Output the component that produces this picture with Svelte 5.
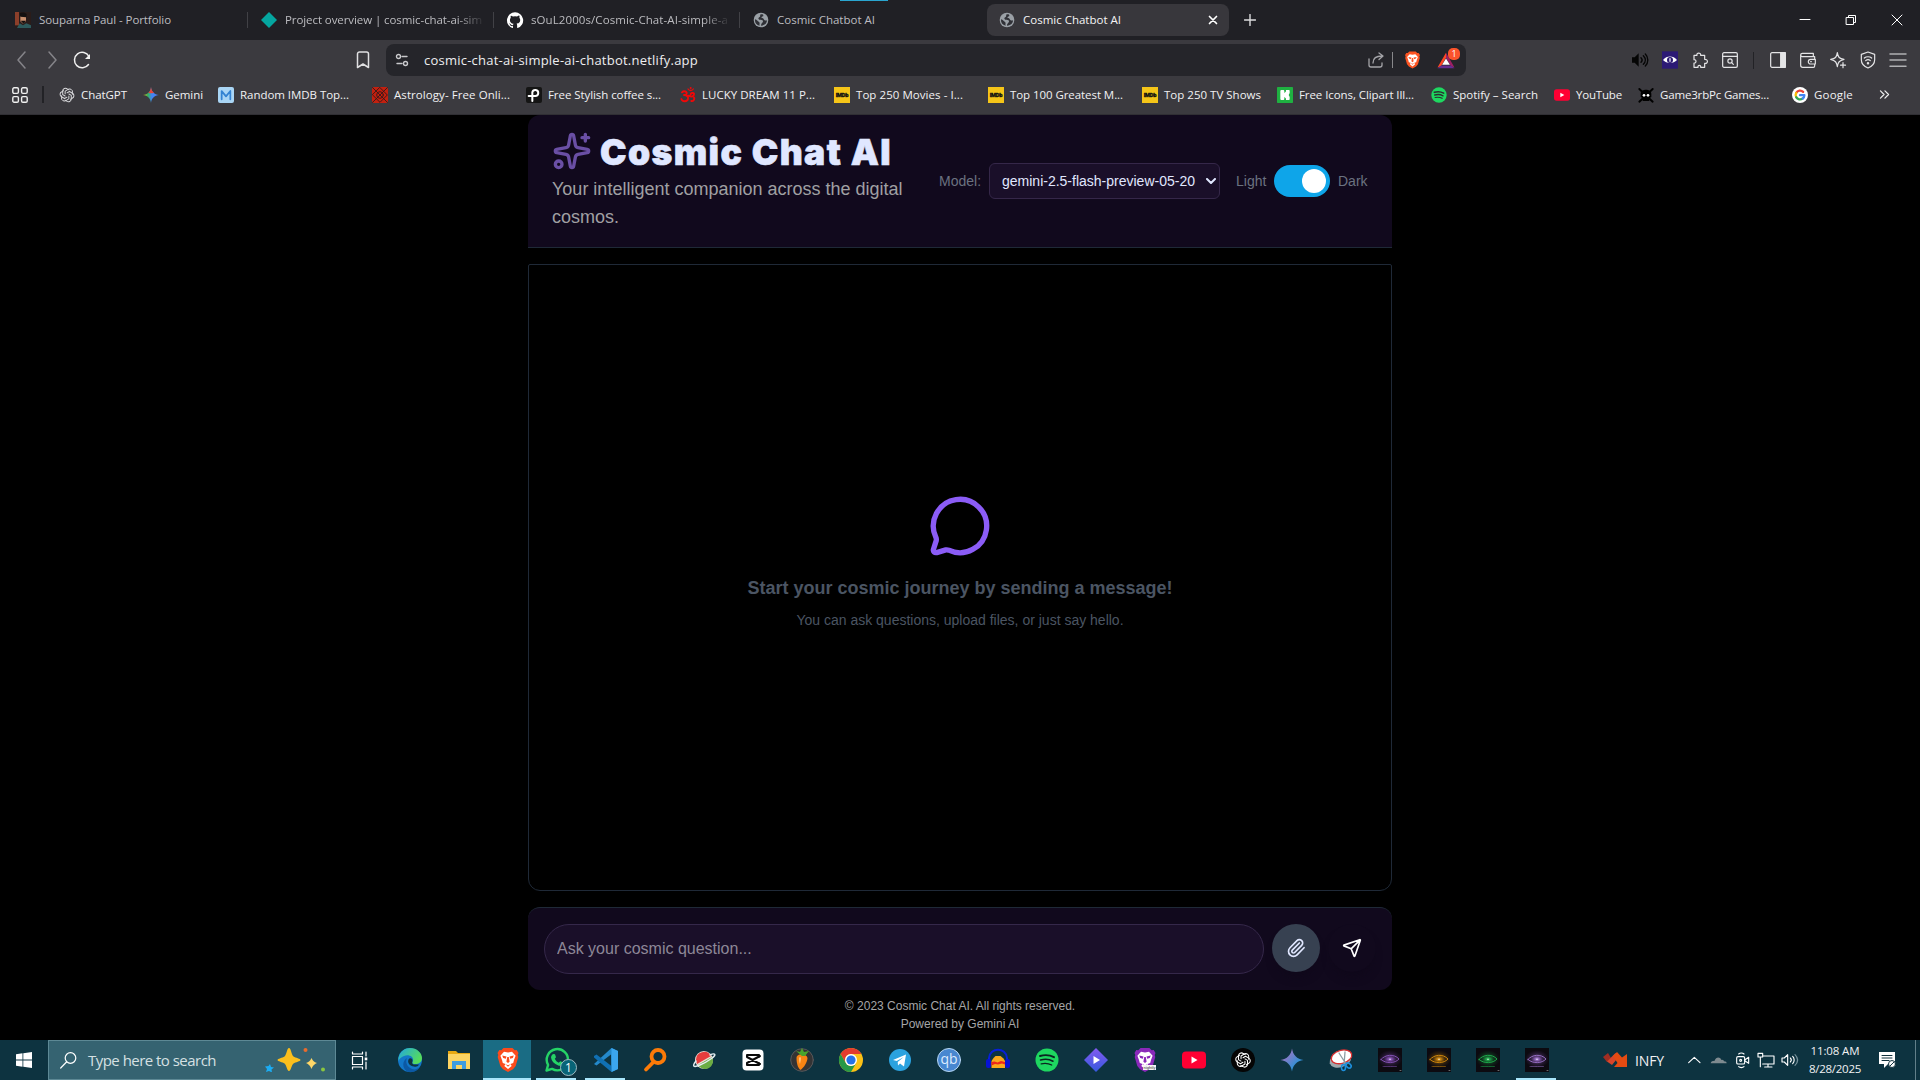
<script>
  function fit(node, width) {
    if (!width) return;
    const range = document.createRange();
    range.selectNodeContents(node);
    const natural = range.getBoundingClientRect().width;
    node.style.letterSpacing = `${(width - natural) / node.textContent.length}px`;
  }

  // Six interlocked petals, turned round the centre.
  const petals = [0, 60, 120, 180, 240, 300]
    .map((a) => `<path d="M9.200 10.300V6.200l4.600-2.700a4.300 4.300 0 0 1 6.400 4.300v3" transform="rotate(${a} 12 12)"/>`)
    .join('');
  const gpt = `<g fill="none" stroke="currentColor" stroke-width="1.500" stroke-linecap="round">${petals}</g>`;
  const globe = '<circle cx="12" cy="12" r="11" fill="#9aa0a6"/><path fill="#303137" d="M13 3.500c-4 0-1 3-3 4s-3 3-.500 4 5-.300 5.500 2-3 3-3 7c6 0 9-4 9-8-2 1-4 0-5-2s-3.500-1-3.500-2.500 3-1 3-2.500-1-2-2.500-2zM3 11c3 .500 4 3 6 4s0 4 1 5.500C5 19.500 2.500 16 3 11z"/>';
  const spark4 = 'M12 0C12.8 7 17 11.2 24 12 17 12.8 12.8 17 12 24 11.2 17 7 12.8 0 12 7 11.2 11.2 7 12 0z';
  const spotify = (bg, w) => `<circle cx="12" cy="12" r="11.5" fill="#1ed760"/><g fill="none" stroke="${bg}" stroke-linecap="round"><path stroke-width="${w}" d="M5 8c5-1.5 10-1 14 1.2"/><path stroke-width="${w * 0.85}" d="M5.6 12c4-1.2 9-.8 12.4 1.2"/><path stroke-width="${w * 0.7}" d="M6.2 15.8c4-.9 7.4-.5 10.5 1.2"/></g>`;
  const lion = (bg, fg) => `<path fill="${bg}" d="M7.500 0h9l2.200 2.200 2-.200L22.500 5l-.800 2 .600 2-2.600 9-2.700 3.200L12 24l-5-2.800L4.300 18 1.700 9l.600-2-.800-2 1.800-3 2 .200z"/><path fill="${fg}" d="M8 3.800l4 .700 4-.700 3.600 4-1.600 4.200-.800 3-2.700 1 1.200 2L12 21l-3.700-3 1.200-2-2.700-1L6 12 4.400 7.800z"/><path fill="${bg}" d="M6.200 7.600l4.300.900-.700 2.300-2.600-.800zM17.800 7.600l-4.300.900.700 2.300 2.600-.800zM11.200 9h1.600l.800 4.800L12 15l-1.600-1.200zM9.500 16.300l2.500 1 2.500-1-2.500 2.400z"/>`;
  const imdb = '<rect width="24" height="24" fill="#f5c518"/><text x="2.500" y="15.500" font-family="Roboto" font-weight="900" font-size="8.500" textLength="19" stroke="#111" stroke-width=".5" fill="#111">IMDb</text>';
  const yt = '<rect y="3.500" width="24" height="17" rx="4" fill="#ff0033"/><path fill="#fff" d="M9.500 8.500v7l6-3.500z"/>';
  const galaxy = (id, c, d) => `<defs><radialGradient id="${id}"><stop offset="0" stop-color="#fff"/><stop offset=".25" stop-color="${c}"/><stop offset="1" stop-color="${d}" stop-opacity="0"/></radialGradient></defs><rect width="24" height="24" fill="#0c0a10"/><ellipse cx="12" cy="11" rx="12" ry="9" fill="url(#${id})" opacity=".45"/><path d="M3 11.500c4-5 13-6 18-.500-4 4.500-13 5-18 .500z" fill="none" stroke="${c}" stroke-width="1" opacity=".95"/><ellipse cx="12" cy="11.200" rx="6" ry="3.800" fill="url(#${id})"/><path stroke="${c}" stroke-width=".8" stroke-dasharray="1 .4" opacity=".55" d="M5 18.500h14"/><path stroke="#aaa" stroke-width="1" opacity=".6" d="M22 22.500h1"/>`;

  const tabs = [
    { title: 'Souparna Paul - Portfolio', w: 132, icon: '<rect width="24" height="24" fill="#2a1c1a"/><path fill="#8c3f2a" d="M0 0h6v20H0z"/><path fill="#c98f6e" d="M8 6h8.500v8l-4 4-4.500-4z"/><path fill="#141010" d="M7 2c3-2 8-2 10.500 1L17 8 8 7zM8.500 13h8l-3.500 5z"/><path fill="#2d5a5c" d="M3 24l4-7 5 3 5-3 7 3v4z"/>' },
    { title: 'Project overview | cosmic-chat-ai-sim', w: 197, fade: true, icon: '<path fill="#05a6a0" d="M12 0l12 12-12 12L0 12z"/>' },
    { title: 'sOuL2000s/Cosmic-Chat-AI-simple-a', w: 197, fade: true, icon: '<path fill="#fff" d="M12 .5a12 12 0 0 0-3.800 23.400c.6.1.8-.3.8-.6v-2.200c-3.300.7-4-1.400-4-1.400-.6-1.400-1.400-1.800-1.400-1.800-1-.7.100-.7.100-.7 1.200.1 1.900 1.200 1.900 1.200 1 1.800 2.800 1.300 3.500 1 .1-.8.4-1.300.8-1.600-2.700-.3-5.500-1.300-5.500-6 0-1.200.5-2.300 1.300-3.100-.2-.4-.6-1.600.1-3.200 0 0 1-.3 3.300 1.200a11.500 11.500 0 0 1 6 0C17.400 5.100 18.400 5.400 18.400 5.400c.7 1.600.3 2.800.1 3.200.8.8 1.300 1.900 1.300 3.200 0 4.600-2.800 5.600-5.500 5.900.5.4.9 1 .9 2.200v3.400c0 .3.200.7.8.6A12 12 0 0 0 12 .5z"/>' },
    { title: 'Cosmic Chatbot AI', w: 98, icon: globe },
    { title: 'Cosmic Chatbot AI', w: 98, active: true, icon: globe }
  ];

  const marks = [
    { t: 'ChatGPT', w: 46, cell: 84, icon: gpt },
    { t: 'Gemini', w: 38, cell: 75, icon: `<defs><linearGradient id="gm" x1="0" y1="0" x2="1" y2="0"><stop offset="0" stop-color="#f9c512"/><stop offset=".3" stop-color="#35b35a"/><stop offset=".55" stop-color="#4285f4"/><stop offset="1" stop-color="#4a7df5"/></linearGradient></defs><path fill="url(#gm)" d="${spark4}"/><path fill="#ea4335" d="M12 0c.3 4 2 7 4.500 9L12 9.500 8 9c2.500-2 3.700-5 4-9z"/>` },
    { t: 'Random IMDB Top...', w: 109, cell: 154, icon: '<rect width="24" height="24" rx="3" fill="#a9d5f5"/><path d="M5.500 18.500V6L12 14l6.500-8v12.500" fill="none" stroke="#3383d2" stroke-width="2.600"/>' },
    { t: 'Astrology- Free Onli...', w: 116, cell: 154, icon: '<rect width="24" height="24" rx="3" fill="#c3200f"/><g fill="none" stroke="#35191a" stroke-width="1.400"><path d="M1 1l22 22M23 1L1 23M12 1l11 11-11 11L1 12z"/><circle cx="12" cy="12" r="5"/></g>' },
    { t: 'Free Stylish coffee s...', w: 113, cell: 154, icon: '<rect width="24" height="24" rx="3" fill="#151515"/><path d="M9.500 21V8a4.500 4.500 0 1 1 4.500 5.500H4" fill="none" stroke="#fff" stroke-width="3"/>' },
    { t: 'LUCKY DREAM 11 P...', w: 113, cell: 154, icon: '<g fill="none" stroke="#f00808" stroke-width="2.800" stroke-linecap="round"><path d="M3 8c3-3 8-1 7 2-.4 2-3 2-4 2 4 0 7 2 6 6s-8 5-10 0"/><path d="M11 14c3-3 5 2 8 0s3-6-1-5c-2 .5-2 2-2 2M20 14c3 3 1 8-3 7"/><path d="M12 3c2 3 6 3 8 0" stroke-width="2"/></g><circle cx="16" cy="1.500" r="1.500" fill="#f00808"/>' },
    { t: 'Top 250 Movies - I...', w: 107, cell: 154, icon: imdb },
    { t: 'Top 100 Greatest M...', w: 113, cell: 154, icon: imdb },
    { t: 'Top 250 TV Shows', w: 97, cell: 135, icon: imdb },
    { t: 'Free Icons, Clipart Ill...', w: 115, cell: 154, icon: '<rect width="24" height="24" rx="1" fill="#1fb141"/><path fill="#fff" d="M5 6a1.500 1.500 0 0 1 1.500-1.500h3A1.500 1.500 0 0 1 11 6v3a4 4 0 0 0 2.500-4.500H18A1.500 1.500 0 0 1 19 6.500V9l-1.500 3 1.500 3v3a1.500 1.500 0 0 1-1 1.500h-4.500A4 4 0 0 0 11 15v3a1.500 1.500 0 0 1-1.500 1.500h-3A1.500 1.500 0 0 1 5 18z"/>' },
    { t: 'Spotify – Search', w: 85, cell: 123, icon: spotify('#2b2f30', 2.4) },
    { t: 'YouTube', w: 46, cell: 84, icon: yt },
    { t: 'Game3rbPc Games...', w: 109, cell: 154, icon: '<path stroke="#000" stroke-width="3" stroke-linecap="round" d="M2 3l20 19M22 3L2 22"/><path fill="#000" d="M4 10c0-8 16-8 16 0v5l-3 2v4H7v-4l-3-2z"/><circle cx="9" cy="12.500" r="2" fill="#fff"/><circle cx="15" cy="12.500" r="2" fill="#fff"/>' },
    { t: 'Google', w: 39, cell: 87, icon: '<circle cx="12" cy="12" r="12" fill="#fff"/><g fill="none" stroke-width="3.400"><path stroke="#ea4335" d="M6.300 8.800A6.600 6.600 0 0 1 16.700 7.300"/><path stroke="#fbbc05" d="M6.300 8.800a6.600 6.600 0 0 0 0 6.400"/><path stroke="#34a853" d="M6.300 15.200A6.600 6.600 0 0 0 16 17.300"/><path stroke="#4285f4" d="M16 17.300A6.600 6.600 0 0 0 18.600 12.200H12"/></g>' }
  ];

  const tools = [
    { icon: '<path fill="#050505" stroke="none" d="M0 8h4l6-6v20l-6-6H0z"/><path stroke="#050505" d="M13.500 8.500c2 2 2 5 0 7M17 5.500c4 4 4 9 0 13M20 3c5 5 5 13 0 18" stroke-width="2"/>' },
    { icon: '<rect y="-1" width="24" height="26" fill="#2c1a75" stroke="none"/><path fill="#fff" stroke="none" d="M1.500 12C7 5 17 5 22.500 12 17 18 7 18 1.500 12z"/><circle cx="12" cy="12" r="4.500" fill="#2c1a75" stroke="none"/><path stroke="#fff" d="M12 10v4"/>' },
    { icon: '<path d="M3 5h4.500C6 .500 14 .500 13 5h6v6c5.500-.500 5.500 7 0 6v6h-6c1-4-5-4-4 0H3v-6.500c4 .500 4-5.500 0-5z"/>' },
    { icon: '<rect x="1" y="1" width="22" height="22" rx="2"/><path d="M1 6.500h22"/><circle cx="12" cy="13.500" r="3.200"/><path d="M14.500 16l2.500 2.500"/>' },
    { sep: true },
    { icon: '<rect x="1" y="1" width="22" height="22" rx="2"/><path fill="#e4e4e6" d="M16 1h7v22h-7z"/>' },
    { icon: '<path d="M20 6V2H3.500a2.500 2.500 0 0 0 0 5H22v4M1 4.500V20a3 3 0 0 0 3 3h16a2 2 0 0 0 2-2v-3M23 11h-7a3.500 3.500 0 0 0 0 7h7z"/><path d="M16 14.500h1"/>' },
    { icon: '<path d="M11 1c1 7 3 9 10 10-7 2-9 4-10 11-1-7-3-9-10-11 7-1 9-3 10-10zM19.500 16v7.500M15.800 19.700h7.500"/>' },
    { icon: '<path d="M12 0l10 3.500v8c0 6-4 10-10 12.500C6 21.500 2 17.500 2 11.500v-8z"/><path d="M6.500 9c3-2.500 8-2.500 11 0M8.500 13c2-1.800 5-1.800 7 0"/><circle cx="12" cy="16.800" r="1"/>' },
    { icon: '<path stroke="#b0b0b3" stroke-width="2.200" d="M0 3h24M0 12h24M0 21.500h24"/>' }
  ];

  const apps = [
    { n: 'Task view', icon: '<g fill="none" stroke="#fff" stroke-width="1.200"><path d="M4.500 8.500h10v8h-10zM4.500 4v2h10V4M4.500 21v-2h10v2M18 4v4M18 14v7"/></g><path fill="#fff" d="M16.700 9.500h2.600v2.800h-2.600z"/>' },
    { n: 'Edge', icon: '<defs><linearGradient id="eg" x1="0" y1="0" x2="1" y2=".5"><stop offset="0" stop-color="#22a7df"/><stop offset="1" stop-color="#55dc5c"/></linearGradient></defs><circle cx="12" cy="12" r="12" fill="#1277c8"/><path fill="url(#eg)" d="M.5 10C2 3 7 0 12 0c7 0 12 5 12 10 0 4-3 6-7 6-3 0-3-1-2-3 1-5-5-7-9-5-3 1-5 3-5.500 5z"/><path fill="#0c59a4" d="M9 10c-2 4 0 9 5 11 3 1 5 0 8-2-3 5-9 6-13 4.500C4 20 4 13 9 10z"/><path fill="#0e3442" d="M10.500 11.500c1.500-2.500 4.500-1 4 1.500-1 3 0 4 6.500 3.500-1 2-3 2.500-5 2-4-.500-7-3.500-5.500-7z"/>' },
    { n: 'Explorer', icon: '<path fill="#e8a912" d="M1 3h8l2 2h12v4H1z"/><path fill="#fcd462" d="M1 6h22v15H1z"/><path fill="#3e9ce0" d="M5 21v-8h14v8h-4v-4H9v4z"/>' },
    { n: 'Brave', active: true, icon: lion('#fb4b1c', '#fff') },
    { n: 'WhatsApp', open: true, badge: '1', icon: '<path fill="#0e3442" stroke="#25d366" stroke-width="2.400" d="M1.500 22.500l1.600-5.600a10.600 10.600 0 1 1 4 4z"/><path fill="#25d366" d="M8 6l2 .2 1 3-1.200 1.500c1 2 2 3 4 4l1.500-1.500 3 1.300c.3 3-3 3.600-5 3C9 16 6.500 13 6 9.500 6 8 7 7 8 6z"/>' },
    { n: 'Code', open: true, icon: '<path fill="#2489ca" d="M17.500 0L24 3v18l-6.500 3L17 6.500 2.500 17.500 0 16z"/><path fill="#1070b3" d="M0 8l2.500-1.500L17.500 18v6L0 9.500z"/><path fill="#3ba6ee" d="M17.500 0L24 3v18l-6.500 3z"/>' },
    { n: 'Finder', icon: '<circle cx="15" cy="8.500" r="6.500" fill="none" stroke="#fc7b08" stroke-width="3.800"/><path stroke="#fc7b08" stroke-width="3.800" stroke-linecap="round" d="M10.500 14L3 21.500"/>' },
    { n: 'Planet', icon: '<circle cx="12" cy="12" r="9" fill="#eadfd5"/><path fill="#e63d3d" d="M4 12a8 8 0 0 1 15-4L5 16z"/><path fill="#6bad42" d="M6 17L20 9a8 8 0 0 1-14 8z"/><path fill="none" stroke="#e3edf0" stroke-width="1.500" d="M4 13C0 18 1 20 8 17s18-10 14-11c-1-.5-4 1-4 1"/>' },
    { n: 'CapCut', icon: '<rect x="1.500" y="1.500" width="21" height="21" rx="4" fill="#fff"/><path fill="none" stroke="#0b0b0b" stroke-width="2" d="M18 9V7H6v2l13 7M18 15v2H6v-2l13-7"/>' },
    { n: 'Studio', icon: '<circle cx="12" cy="12" r="11.300" fill="#343334" stroke="#58585a"/><path fill="#f98413" d="M6.500 10c0-5 10-5 11 0 0 4-4 10-7 12-3-2-4-8-4-12z"/><path fill="#ffc077" d="M9 10c1-2 2-1 2 1l-1 5c-1-2-1-4-1-6z"/><path fill="#4ba52c" d="M12 8L6 3l4 1 2-4 2 4 5-1-4 5z"/>' },
    { n: 'Chrome', icon: '<circle cx="12" cy="12" r="12" fill="#fbc116"/><path fill="#e33b2e" d="M1.600 6A12 12 0 0 1 22.400 6H12a6 6 0 0 0-5.200 9z"/><path fill="#279847" d="M1.600 6a12 12 0 0 0 10.400 18l5.200-9a6 6 0 0 1-10.400 0z"/><circle cx="12" cy="12" r="6" fill="#fff"/><circle cx="12" cy="12" r="4.600" fill="#2672e8"/>' },
    { n: 'Telegram', icon: '<circle cx="12" cy="12" r="11" fill="#2ba2df"/><path fill="#fff" d="M5 12l13-5.500-2 12-4-3-2 2-.3-3.500 6-5-7 4z"/>' },
    { n: 'qb', icon: '<circle cx="12" cy="12" r="11.500" fill="#4887d0" stroke="#b8d7f3"/><text x="12" y="16" text-anchor="middle" font-family="Open Sans" font-size="14" fill="#dcecff">qb</text>' },
    { n: 'Audacity', icon: '<path fill="#f9a81c" d="M5.500 20v-7l2-3 2-2h5l3 2.500 1.500 2.500v7z"/><path fill="#ee261b" d="M5.500 17.500V14l3-.5 3 1 3.500-1.500 4 1v2.500l-3-1-4 1-3-.5z"/><path fill="none" stroke="#0820d8" stroke-width="2" d="M3 15V10C4-1 20-1 21 10v5"/><rect y="11" width="5" height="9" rx="2" fill="#0713d5"/><rect x="19" y="11" width="5" height="9" rx="2" fill="#0713d5"/>' },
    { n: 'Spotify', icon: spotify('#0b2520', 1.9) },
    { n: 'Player', icon: '<defs><linearGradient id="pl" x1="0" y1="0" x2="0" y2="1"><stop offset="0" stop-color="#835af1"/><stop offset="1" stop-color="#3659dd"/></linearGradient></defs><path fill="url(#pl)" d="M12 0l12 12-12 12L0 12z"/><path fill="#fff" d="M9.500 8v8l6.500-4z"/>' },
    { n: 'Brave Nightly', icon: `${lion('#8a29ba', '#fff')}<rect x="10" y="17" width="13" height="5" fill="#f5f5f5"/><text x="10.500" y="21" font-family="Roboto" font-size="4" fill="#333">nightly</text>` },
    { n: 'YouTube', icon: yt },
    { n: 'ChatGPT', icon: `<circle cx="12" cy="12" r="12" fill="#050505"/><g color="#fff" transform="translate(3.600 3.600) scale(.7)">${gpt}</g>` },
    { n: 'Gemini', icon: `<defs><linearGradient id="g2" x1="0" y1="0" x2="1" y2="1"><stop offset=".2" stop-color="#9f76c4"/><stop offset=".7" stop-color="#318fd4"/></linearGradient></defs><path fill="url(#g2)" d="M12 0.500C13 7 17 11 23.500 12 17 13 13 17 12 23.500 11 17 7 13 .5 12 7 11 11 7 12 .5z"/>` },
    { n: 'Snipping', icon: '<ellipse cx="11" cy="12" rx="11" ry="7" fill="#9da8ac" transform="rotate(-16 12 11)"/><ellipse cx="12.500" cy="9" rx="10.500" ry="6.500" fill="#fff" stroke="#d93030" stroke-width="1.300" transform="rotate(-16 12 9)"/><path stroke="#8c9da3" stroke-width="1.300" d="M10 5l7 11M16 4l-1 13"/><g fill="none" stroke="#1d8fdc" stroke-width="1.600"><ellipse cx="14.500" cy="19.500" rx="2" ry="3"/><ellipse cx="19.500" cy="17.500" rx="2" ry="3" transform="rotate(-50 19.500 17.500)"/></g>' },
    { n: 'Galaxy violet', icon: galaxy('ga', '#8854b9', '#64308a') },
    { n: 'Galaxy gold', icon: galaxy('gb', '#d48a0c', '#8a5400') },
    { n: 'Galaxy green', icon: galaxy('gc', '#1fae4d', '#0c6b2a') },
    { n: 'Galaxy purple', open: true, icon: galaxy('gd', '#9a72c8', '#64308a') }
  ];

  const tray = [
    '<path d="M4 16l8.500-8 8.500 8"/>',
    '<path fill="#7e8a8f" stroke="none" d="M1 17c0-3 3-4 6-4 2-6 8-6 10-1 2-1 4 1 4 2 3 0 4 1 4 3z"/>',
    '<rect x="4" y="7" width="12" height="11" rx="2"/><circle cx="10" cy="12.500" r="1.500"/><path d="M16 12l6-4v9l-6-4M7 3c2-2 6-2 8 0M7 22c2 2 6 2 8 0"/>',
    '<path d="M7 6h17v12H7M15 18v4M10 22.500h11M0 2h7v5.500H0zM3.500 8v14"/>',
    '<path d="M0 9h3.500l5-5v16l-5-5H0z"/><path d="M12.500 9c2 2 2 4 0 6M16 6.500c3 3 3 8 0 11"/><path stroke="#76919b" d="M19.500 4c5 5 5 11 0 16"/>'
  ];

  let dark = $state(true);
  let question = $state('');
</script>

{#snippet glyph(body)}
  <svg class="glyph" viewBox="0 0 24 24">{@html body}</svg>
{/snippet}

<div class="screen">
  <div class="tabbar">
    {#each tabs as tab}
      <div class="tab" class:active={tab.active}>
        {@render glyph(tab.icon)}
        <div class="label" class:fade={tab.fade}><span use:fit={tab.w}>{tab.title}</span></div>
        {#if tab.active}
          <svg class="close" viewBox="0 0 10 10"><path d="M1.500 1.500l7 7M8.500 1.500l-7 7" /></svg>
        {/if}
      </div>
    {/each}
    <svg class="plus" viewBox="0 0 12 12"><path d="M6 .5v11M.5 6h11" /></svg>
    <div class="winctl">
      <svg viewBox="0 0 12 12"><path d="M1 5.500h10" /></svg>
      <svg viewBox="0 0 12 12"><path d="M1.500 3.500h7v7h-7zM3.500 3.500v-2h7v7h-2" /></svg>
      <svg viewBox="0 0 12 12"><path d="M1 1l10 10M11 1L1 11" /></svg>
    </div>
    <div class="strip"></div>
  </div>

  <div class="toolbar">
    <div class="nav">
      <svg class="dim" viewBox="0 0 20 20"><path d="M13 2L6 10l7 8" /></svg>
      <svg class="dim" viewBox="0 0 20 20"><path d="M7 2l7 8-7 8" /></svg>
      <svg viewBox="0 0 20 20"><path d="M16.500 14.500A7.700 7.700 0 1 1 17 6.500" stroke-width="1.500" /><path d="M18 4v5h-5z" class="solid" /></svg>
    </div>
    <svg class="save" viewBox="0 0 14 18"><path d="M1.500 3a2 2 0 0 1 2-2h7a2 2 0 0 1 2 2v13.500L7 13l-5.500 3.500z" /></svg>
    <div class="url">
      <svg class="site" viewBox="0 0 14 14"><g><circle cx="3.500" cy="3.500" r="2" /><path d="M7 3.500h5M2 10.500h5" /><circle cx="10.500" cy="10.500" r="2" /></g></svg>
      <div class="address"><span use:fit={274}>cosmic-chat-ai-simple-ai-chatbot.netlify.app</span></div>
      <svg class="share" viewBox="0 0 16 16"><path d="M1 7v6a2 2 0 0 0 2 2h9a2 2 0 0 0 2-2v-2M5 11c0-5 3-7 9-7M11 1l4 3-4 3.500" /></svg>
      <div class="bar light"></div>
      <div class="lion">{@render glyph(lion('#fb5422', '#fff'))}</div>
      <div class="bat">
        {@render glyph('<path fill="#ff4724" d="M12 1L0 22l5-2 7-12z"/><path fill="#9e1f63" d="M12 1l12 21-5-2-7-12z"/><path fill="#662d91" d="M0 23h24l-5-4H5z"/><path fill="#fff" d="M12 9l5.500 9h-11z"/>')}
        <span class="count">1</span>
      </div>
    </div>
    <div class="tools">
      {#each tools as tool}
        {#if tool.sep}<div class="bar"></div>{:else}{@render glyph(tool.icon)}{/if}
      {/each}
    </div>
  </div>

  <div class="bookmarks">
    <svg class="apps4" viewBox="0 0 16 16"><rect x=".8" y=".8" width="5.600" height="5.600" rx="1.300" /><rect x="9.600" y=".8" width="5.600" height="5.600" rx="1.300" /><rect x=".8" y="9.600" width="5.600" height="5.600" rx="1.300" /><rect x="9.600" y="9.600" width="5.600" height="5.600" rx="1.300" /></svg>
    <div class="bar"></div>
    {#each marks as mark}
      <div class="mark" style:width="{mark.cell}px">{@render glyph(mark.icon)}<span use:fit={mark.w}>{mark.t}</span></div>
    {/each}
    <svg class="more" viewBox="0 0 12 10"><path d="M1.500 1l4 4-4 4M6.500 1l4 4-4 4" /></svg>
  </div>

  <main>
    <header>
      <div class="brand">
        <h1>
          <svg viewBox="0 0 24 24"><path d="M11.017 2.814a1 1 0 0 1 1.966 0l1.051 5.558a2 2 0 0 0 1.594 1.594l5.558 1.051a1 1 0 0 1 0 1.966l-5.558 1.051a2 2 0 0 0-1.594 1.594l-1.051 5.558a1 1 0 0 1-1.966 0l-1.051-5.558a2 2 0 0 0-1.594-1.594l-5.558-1.051a1 1 0 0 1 0-1.966l5.558-1.051a2 2 0 0 0 1.594-1.594zM20 2v4M22 4h-4" /><circle cx="4" cy="20" r="2" /></svg>
          <span use:fit={292}>Cosmic Chat AI</span>
        </h1>
        <p>Your intelligent companion across the digital cosmos.</p>
      </div>
      <div class="controls">
        <span class="model">Model:</span>
        <div class="select"><span>gemini-2.5-flash-preview-05-20</span><svg viewBox="0 0 10 6"><path d="M1 1l4 4 4-4" /></svg></div>
        <span class="mode">Light</span>
        <button class="toggle" class:on={dark} aria-label="Theme" onclick={() => (dark = !dark)}><i></i></button>
        <span class="mode">Dark</span>
      </div>
    </header>

    <section class="chat">
      <svg viewBox="0 0 24 24"><path d="M2.992 16.342a2 2 0 0 1 .094 1.167l-1.065 3.290a1 1 0 0 0 1.236 1.168l3.413-.998a2 2 0 0 1 1.099.092 10 10 0 1 0-4.777-4.719" /></svg>
      <strong>Start your cosmic journey by sending a message!</strong>
      <p>You can ask questions, upload files, or just say hello.</p>
    </section>

    <form class="composer" onsubmit={(e) => e.preventDefault()}>
      <input bind:value={question} placeholder="Ask your cosmic question..." />
      <button type="button" class="attach" aria-label="Attach"><svg viewBox="0 0 24 24"><path d="m16 6-8.414 8.586a2 2 0 0 0 2.829 2.829l8.414-8.586a4 4 0 1 0-5.657-5.657l-8.379 8.551a6 6 0 1 0 8.485 8.485l8.379-8.551" /></svg></button>
      <button class="send" aria-label="Send"><svg viewBox="0 0 24 24"><path d="M14.536 21.686a.5.5 0 0 0 .937-.024l6.500-19a.496.496 0 0 0-.635-.635l-19 6.500a.5.5 0 0 0-.024.937l7.930 3.180a2 2 0 0 1 1.112 1.110zM21.854 2.147l-10.940 10.939" /></svg></button>
    </form>

    <footer><p>© 2023 Cosmic Chat AI. All rights reserved.</p><p>Powered by Gemini AI</p></footer>
  </main>

  <div class="taskbar">
    <div class="start"><svg viewBox="0 0 16 16"><path d="M0 2.200L6.500 1.300v6.300H0zM7.300 1.200L16 0v7.600H7.300zM0 8.400h6.500v6.300L0 13.800zM7.300 8.400H16V16l-8.700-1.200z" /></svg></div>
    <div class="search">
      <svg class="lens" viewBox="0 0 17 17"><circle cx="10.500" cy="6" r="5.300" /><path d="M6.500 10L.7 16" /></svg>
      <div class="query"><span use:fit={128}>Type here to search</span></div>
      <svg class="stars" viewBox="0 0 60 24"><path fill="#fbbf1d" d="M24 0c2 0 2.500 7 4.500 8.500 2 1.500 7 2 7 3.500s-5 2-7 3.500c-2 1.500-2.500 7.500-4.500 7.500s-2.500-6-4.500-7.500c-2-1.500-7-2-7-3.500s5-2 7-3.500C21.500 7 22 0 24 0z" /><path fill="#ffd768" d="M46.500 10c1.500 3 2.500 4 5.500 5-3 1.500-4 2.500-5.500 6-1.500-3.500-2.500-4.500-5.500-6 3-1 4-2 5.500-5z" /><path fill="#1cacf3" d="M5 16l1 3 3 .5-2.500 2 .5 3-3-1.500L1 24l1-3-2-2.500 3.500-.5z" /><circle cx="40.500" cy="2" r="2" fill="#e96b2d" /><circle cx="58" cy="21.500" r="2" fill="#8ac640" /></svg>
    </div>
    {#each apps as app, i}
      <div class="app" class:first={i === 0} class:active={app.active} class:open={app.open} title={app.n}>
        {@render glyph(app.icon)}
        {#if app.badge}<span class="badge">{app.badge}</span>{/if}
      </div>
    {/each}
    <div class="stock">
      <svg viewBox="0 0 24 16"><path fill="#9f2d22" d="M0 5l5-4 3 5-4 4z" /><path fill="#d8452a" d="M4 9.500L12.500 1l3 4-6.500 8z" /><path fill="#e54b12" d="M10 4l4-4 5 5.500L24 2v13H11l3.500-4z" /></svg>
      <span use:fit={29}>INFY</span>
    </div>
    <div class="tray">{#each tray as item}{@render glyph(item)}{/each}</div>
    <div class="clock"><span use:fit={49}>11:08 AM</span><span use:fit={52}>8/28/2025</span></div>
    <svg class="note" viewBox="0 0 17 17"><path fill="#fff" d="M0 0h16v12H9l-4 4v-4H0z" /><path stroke="#12323d" d="M3 3.500h10M3 6h10M3 8.500h7" /><circle cx="13" cy="12" r="3.500" fill="#fff" stroke="#12323d" /><path d="M11 14l4-4" stroke="#12323d" /></svg>
    <div class="desktop"></div>
  </div>
</div>

<style>
  :global(body) { background: #000; overflow: hidden; }
  .screen { width: 1920px; height: 1080px; display: flex; flex-direction: column; background: #000; font-family: "Open Sans", "Noto Sans", sans-serif; color: #f1f1f3; overflow: hidden; }
  .screen *, .screen { box-sizing: border-box; }
  svg { display: block; flex: none; fill: none; stroke-linecap: round; stroke-linejoin: round; }
  span { white-space: nowrap; }
  .glyph { width: 16px; height: 16px; stroke: none; overflow: visible; }
  .bar { width: 2px; height: 17px; background: #222226; flex: none; }

  .tabbar { position: relative; height: 40px; display: flex; align-items: center; background: #202025; padding-left: 3px; flex: none; }
  .tab { height: 32px; width: 242px; margin-right: 4px; padding: 0 12px; display: flex; align-items: center; gap: 8px; font-size: 11.500px; color: #bcbcc0; position: relative; flex: none; }
  .tab:not(.active)::after { content: ""; position: absolute; right: -3px; top: 8px; width: 1px; height: 16px; background: #414146; }
  .tab:nth-child(4)::after { display: none; }
  .label { width: 200px; line-height: 16px; padding-bottom: 1px; flex: none; }
  .active .label { width: 177px; }
  .fade { mask-image: linear-gradient(90deg, #000 86%, transparent); }
  .tab.active { background: #38373c; border-radius: 8px; color: #f4f4f5; padding-right: 10px; }
  .close { width: 10px; height: 10px; stroke: #fff; stroke-width: 1.700; }
  .plus { width: 12px; height: 12px; margin-left: 11px; stroke: #dcdcde; stroke-width: 1.400; }
  .winctl { margin-left: auto; display: flex; gap: 34px; padding-right: 17px; }
  .winctl svg { width: 12px; height: 12px; stroke: #fff; }
  .strip { position: absolute; left: 840px; top: 0; width: 48px; height: 1px; background: #2aa5d0; }

  .toolbar { height: 40px; background: #3b3a3f; display: flex; align-items: center; padding-left: 12px; flex: none; }
  .nav { display: flex; gap: 10px; width: 344px; }
  .nav svg { width: 20px; height: 20px; stroke: #f0f0f0; stroke-width: 1.500; }
  .nav .dim { stroke: #858489; }
  .nav .solid { fill: #f0f0f0; stroke: none; }
  .save { width: 14px; height: 18px; stroke: #e0e0e2; stroke-width: 1.500; }
  .url { width: 1080px; height: 32px; margin-left: 16px; background: #25252a; border-radius: 8px; display: flex; align-items: center; padding: 0 11px 0 9px; flex: none; }
  .site { width: 14px; height: 14px; stroke: #c9c9cc; stroke-width: 1.400; }
  .address { margin-left: 15px; flex: 1; font-size: 13px; color: #eeeef0; }
  .share { width: 16px; height: 16px; stroke: #a4a4a8; stroke-width: 1.300; }
  .bar.light { width: 1px; height: 16px; background: #88888b; margin: 0 11px 0 8px; }
  .lion .glyph { width: 17px; height: 18px; }
  .bat { position: relative; margin-left: 16px; }
  .bat .glyph { width: 18px; height: 17px; }
  .count { position: absolute; left: 11px; top: -4px; width: 12px; height: 12px; border-radius: 5px; background: #fb542b; color: #fff; font: 9px/12px "Open Sans", sans-serif; text-align: center; }
  .tools { display: flex; align-items: center; gap: 14px; margin-left: 166px; }
  .tools .glyph { stroke: #e4e4e6; stroke-width: 1.800; }
  .tools .bar { margin: 0 2px 0 1px; width: 1px; }

  .bookmarks { height: 35px; background: #3b3a3f; border-bottom: 1px solid #302f34; display: flex; align-items: center; padding: 0 0 5px 12px; flex: none; }
  .apps4 { width: 16px; height: 16px; stroke: #f0f0f0; stroke-width: 1.400; }
  .bookmarks > .bar { margin: 0 15px 0 14px; }
  .mark { display: flex; align-items: center; gap: 6px; font-size: 11.500px; flex: none; }
  .mark .glyph { color: #d9d9dc; }
  .more { width: 11px; height: 9px; stroke: #eee; stroke-width: 1.400; }

  main { width: 864px; height: 925px; margin: 0 auto; font-family: "Liberation Sans", Arial, sans-serif; display: flex; flex-direction: column; flex: none; }
  header { height: 133px; background: #11091d; border-bottom: 1px solid #1f2937; border-radius: 12px 12px 0 0; padding: 16px 24px; display: flex; align-items: center; flex: none; }
  .brand { width: 387px; height: 100px; }
  h1 { margin: 0; height: 44px; display: flex; align-items: flex-start; gap: 8px; font-family: Inter, sans-serif; font-size: 35.500px; font-weight: 900; line-height: 44px; color: #e0e7ff; -webkit-text-stroke: 0.6px #e0e7ff; }
  h1 svg { width: 40px; height: 40px; stroke: #6a4fa5; stroke-width: 2; }
  .brand p { margin: 0; width: 370px; font-size: 18px; line-height: 28px; color: #a0a0a3; }
  .controls { display: flex; align-items: center; height: 36px; font-size: 14px; color: #6b7280; }
  .model { width: 50px; }
  .select { width: 231px; height: 36px; border: 1px solid #352749; border-radius: 6px; background: #1a0f29; color: #e0e7ff; display: flex; align-items: center; justify-content: space-between; padding: 0 3px 0 12px; }
  .select svg { width: 10px; height: 6px; stroke: #e0e7ff; stroke-width: 2; }
  .mode { width: 38px; margin-left: 16px; }
  button { border: 0; padding: 0; cursor: pointer; }
  .toggle { width: 56px; height: 32px; border-radius: 16px; background: #64748b; padding: 4px; display: flex; }
  .toggle.on { background: #0ea5e9; justify-content: flex-end; }
  .toggle i { width: 24px; height: 24px; border-radius: 50%; background: #fff; }
  .toggle + .mode { margin-left: 8px; width: auto; }
  .chat { height: 627px; margin-top: 16px; border: 1px solid #1f2937; border-radius: 2px 2px 12px 12px; display: flex; flex-direction: column; align-items: center; padding-top: 229px; color: #4b5563; flex: none; }
  .chat svg { width: 64px; height: 64px; stroke: #8b5cf6; stroke-width: 2; }
  .chat strong { margin-top: 16px; font-size: 18px; line-height: 28px; }
  .chat p { margin: 8px 0 0; font-size: 14px; line-height: 20px; }
  .composer { height: 83px; margin-top: 16px; padding: 16px; border-top: 1px solid #1f2937; border-radius: 12px; background: #11091d; display: flex; gap: 8px; flex: none; }
  input { width: 720px; height: 50px; border: 1px solid #35284a; border-radius: 25px; background: #1a0f29; padding: 0 12px; font: 16px "Liberation Sans", Arial, sans-serif; color: #e0e7ff; outline: none; }
  input::placeholder { color: #8d8797; opacity: 1; }
  .composer button { width: 48px; height: 48px; border-radius: 50%; display: grid; place-items: center; flex: none; }
  .composer svg { width: 20px; height: 20px; stroke: #fff; stroke-width: 2; }
  .composer .attach { background: #374151; box-shadow: 0 8px 10px -4px #0f081a; }
  .composer .attach svg { stroke: #e0e7ff; }
  .composer .send { background: #11091d; box-shadow: 0 8px 10px -4px #0f081a; }
  footer { padding-top: 7px; text-align: center; font-size: 12px; line-height: 18px; color: #a5a5a7; }
  footer p { margin: 0; }

  .taskbar { height: 40px; background: #0d3340; display: flex; align-items: center; flex: none; position: relative; }
  .start { width: 48px; display: grid; place-items: center; }
  .start svg { width: 16px; height: 16px; fill: #fff; }
  .search { width: 288px; height: 40px; background: #356371; border: 1px solid #5d8995; display: flex; align-items: center; padding: 0 10px 0 11px; }
  .lens { width: 17px; height: 17px; stroke: #fff; stroke-width: 1.200; }
  .query { width: 177px; margin-left: 11px; font-size: 15px; color: #d5e0e3; }
  .stars { width: 60px; height: 24px; }
  .app { width: 49px; height: 40px; display: grid; place-items: center; position: relative; flex: none; }
  .app.first { width: 48px; margin-right: 1px; }
  .app .glyph { width: 24px; height: 24px; }
  .app.active { background: linear-gradient(#1a6c84 0 38px, #a9e6fb 38px) left 0 top / 48px 40px no-repeat; }
  .app.open::after { content: ""; position: absolute; bottom: 0; left: 4px; width: 40px; height: 2px; background: #a9e6fb; }
  .badge { position: absolute; left: 28px; top: 19px; width: 17px; height: 17px; border-radius: 50%; border: 1px solid #9cb9c0; background: #086477; color: #fff; font-size: 12px; line-height: 15px; text-align: center; }
  .stock { width: 125px; padding-left: 42px; display: flex; align-items: center; gap: 8px; font-size: 14px; flex: none; }
  .stock svg { width: 24px; height: 16px; }
  .tray { display: flex; gap: 8px; flex: none; }
  .tray .glyph { stroke: #fff; stroke-width: 1.700; }
  .clock { width: 66px; margin-left: 4px; display: flex; flex-direction: column; align-items: center; font-size: 11.500px; line-height: 18px; flex: none; }
  .note { width: 17px; height: 17px; margin-left: 11px; }
  .desktop { position: absolute; right: 4px; top: 0; width: 1px; height: 40px; background: #62808a; }
</style>
